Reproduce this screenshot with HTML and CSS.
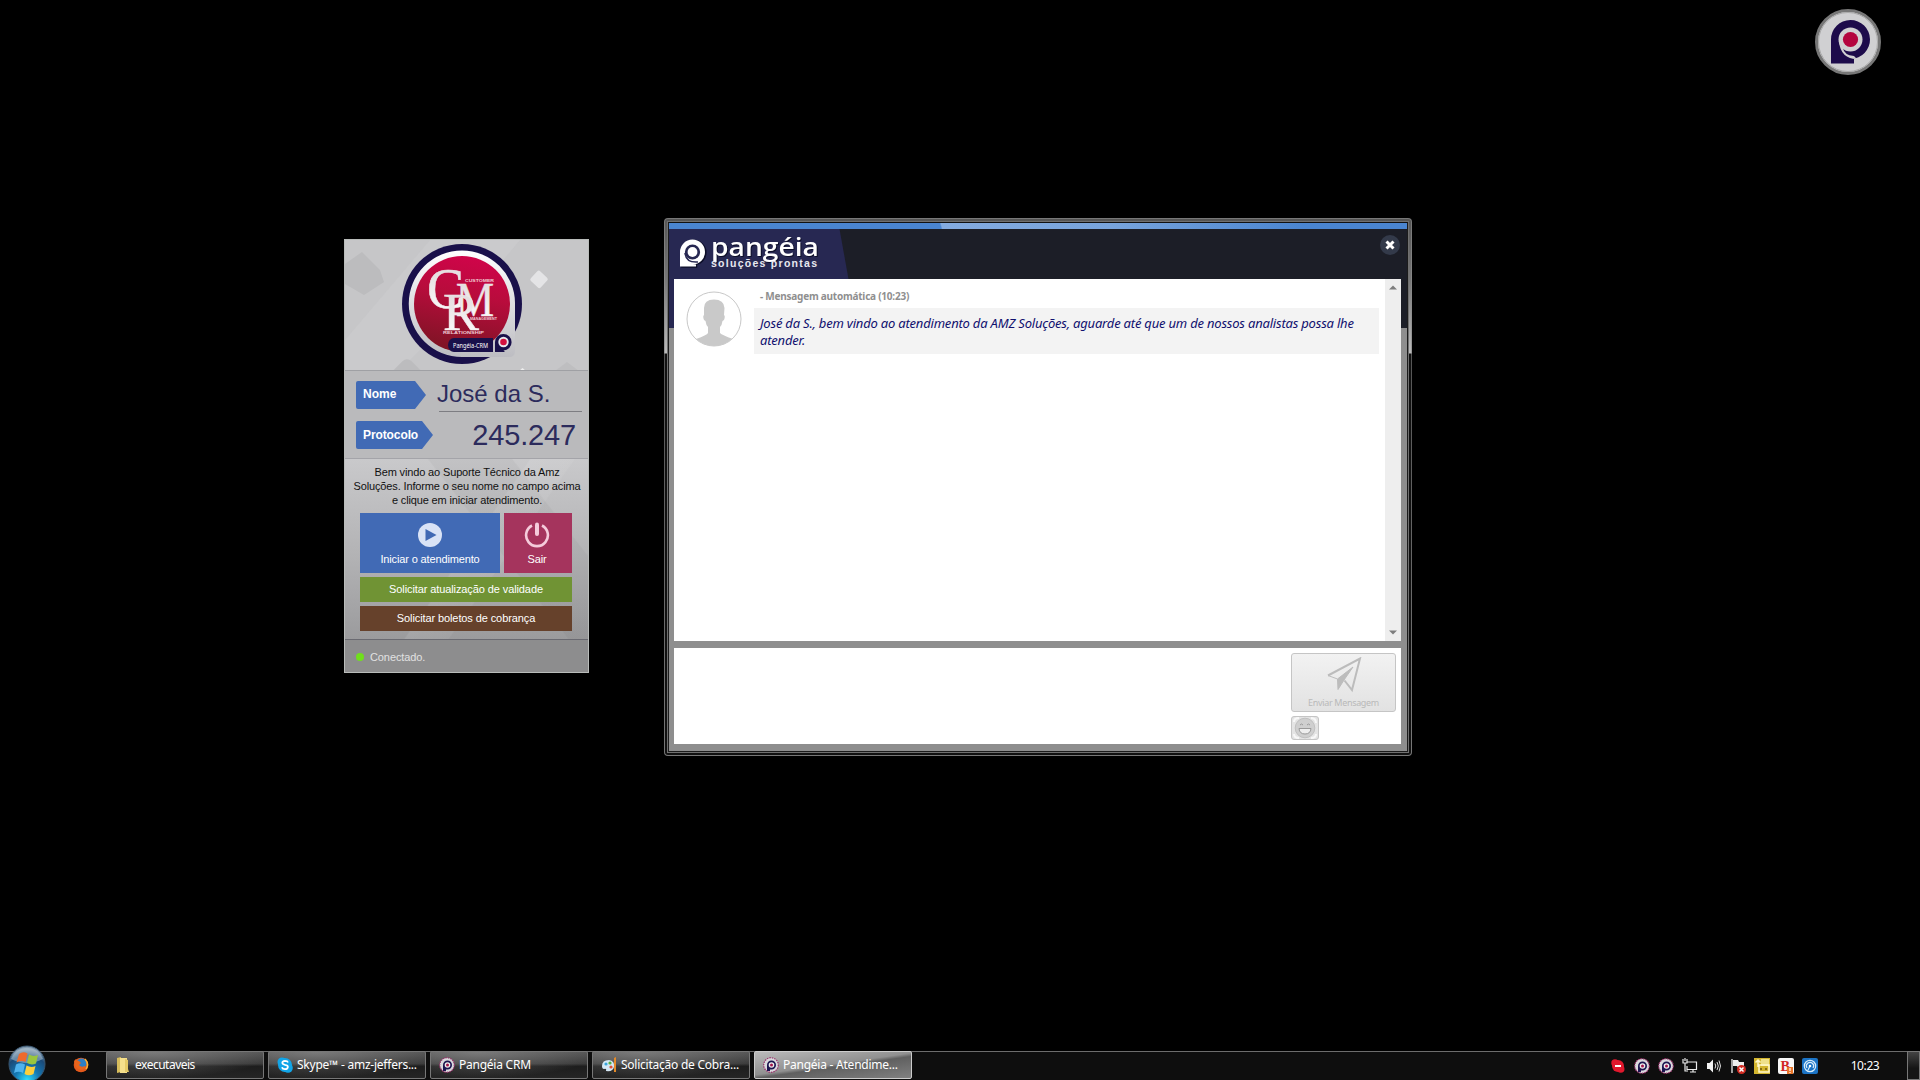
FILE: index.html
```html
<!DOCTYPE html>
<html lang="pt-BR">
<head>
<meta charset="utf-8">
<title>Pangéia - Atendimento</title>
<link rel="stylesheet" href="styles.css">
</head>
<body>
<svg class="defs" width="0" height="0">
  <defs>
    <linearGradient id="silver" x1="0" y1="0" x2="0" y2="1"><stop offset="0" stop-color="#fff"/><stop offset="1" stop-color="#bdbdc2"/></linearGradient>
    <linearGradient id="crimson" x1="0.6" y1="0" x2="0.4" y2="1"><stop offset="0" stop-color="#d0044a"/><stop offset=".4" stop-color="#b80c3c"/><stop offset="1" stop-color="#7d1424"/></linearGradient>
    <linearGradient id="letters" x1="0" y1="0" x2="0" y2="1"><stop offset="0" stop-color="#dcd4d6"/><stop offset="1" stop-color="#fff"/></linearGradient>
    <radialGradient id="orb" cx=".5" cy=".95" r=".85"><stop offset="0" stop-color="#2fe0ff"/><stop offset=".4" stop-color="#1478b4"/><stop offset=".8" stop-color="#1b4a78"/><stop offset="1" stop-color="#7d95ab"/></radialGradient>
    <symbol id="ptray" viewBox="0 0 16 16">
      <circle cx="8" cy="8" r="7.300" fill="#d9d9dd" stroke="#9b2f6b" stroke-width="1.200" stroke-dasharray="1.500 1"/>
      <path d="M4 14V8A4.500 4.500 0 1 1 8.500 12.500H7V14Z" fill="#1d1550"/>
      <circle cx="8.500" cy="8" r="2.800" fill="#eee"/><circle cx="8.500" cy="8" r="1.500" fill="#a2164c"/>
    </symbol>
  </defs>
</svg>

<svg class="desk-badge" width="68" height="68" viewBox="0 0 68 68">
  <circle cx="34" cy="34" r="31.500" fill="#d0d0d2" stroke="#777" stroke-width="3"/>
  <circle cx="34" cy="34" r="29.500" fill="none" stroke="#aaa" stroke-width="1"/>
  <path d="M17 55.500V31.500A19.500 19.500 0 1 1 37 51H40V55.500Z" fill="#1d0b4b"/>
  <circle cx="36.500" cy="31.500" r="12" fill="#d0d0d2"/>
  <path d="M25 34Q27 51 43 51L40 48Q30 47 29 40Z" fill="#d0d0d2"/>
  <circle cx="36.500" cy="31.500" r="7.600" fill="#b4053f"/>
</svg>

<section class="login">
  <div class="login-top">
    <svg width="243" height="131" viewBox="345 240 243 131">
      <rect x="345" y="240" width="243" height="131" fill="#c6c6c8"/>
      <path d="M345 264L362 252L380 270L384 282L364 295L345 284Z" fill="#bcbcbe"/>
      <path d="M430 240h90l-50 60-70 70h-55v-30Z" fill="#cececf" opacity=".5"/>
      <rect x="392" y="363" width="30" height="30" rx="6" transform="rotate(45 407 378)" fill="#bcbcbe"/>
      <path d="M555 371l12-9 12 9Z" fill="#bebec0"/>
      <rect x="532.500" y="272.500" width="13.500" height="13.500" rx="2" transform="rotate(43 539 279)" fill="#e4e4e6"/>
      <path d="M519 371l3.500-3 3.500 3Z" fill="#eee"/>
      <circle cx="462" cy="304" r="60" fill="#19104a"/>
      <path d="M462 250.500A53 53 0 0 1 515 303V351Q515 357 509 357H462A53 53 0 0 1 462 250.500Z" fill="url(#silver)"/>
      <circle cx="462" cy="304" r="48" fill="url(#crimson)"/>
      <g fill="url(#letters)" stroke="#efe8ea" stroke-width=".5" font-family="Liberation Serif, serif">
        <text x="427" y="308" font-size="57" textLength="37" lengthAdjust="spacingAndGlyphs">C</text>
        <text x="456" y="315.500" font-size="48" textLength="38" lengthAdjust="spacingAndGlyphs">M</text>
        <text x="443" y="329.500" font-size="53" textLength="36" lengthAdjust="spacingAndGlyphs">R</text>
      </g>
      <g fill="#f1cdd5" font-family="Liberation Sans, sans-serif" font-weight="bold" font-size="4">
        <text x="465" y="282" textLength="29" lengthAdjust="spacingAndGlyphs">CUSTOMER</text>
        <text x="470" y="320" font-size="3.500" textLength="27" lengthAdjust="spacingAndGlyphs">MANAGEMENT</text>
        <text x="443" y="334" textLength="41" lengthAdjust="spacingAndGlyphs">RELATIONSHIP</text>
      </g>
      <path d="M454 338H493V352H454A6 7 0 0 1 454 338Z" fill="#19104a"/>
      <text x="453" y="347.500" font-family="Noto Sans, sans-serif" font-size="6.200" fill="#fff" textLength="35" lengthAdjust="spacingAndGlyphs">Pangéia-CRM</text>
      <path d="M495 352V342A8.300 8.300 0 1 1 503.500 350.500L505 352Z" fill="#19104a"/>
      <circle cx="503.500" cy="342" r="5.200" fill="#e8e8ec"/><circle cx="503.500" cy="342" r="3.300" fill="#d4123f"/>
    </svg>
  </div>
  <div class="fields">
    <div class="field"><span class="tag tag-name">Nome</span><span class="name">José da S.</span></div>
    <div class="field"><span class="tag tag-prot">Protocolo</span><span class="prot">245.247</span></div>
  </div>
  <div class="login-body">
    <p class="welcome"><span>Bem vindo ao Suporte Técnico da Amz</span><span>Soluções. Informe o seu nome no campo acima</span><span>e clique em iniciar atendimento.</span></p>
    <div class="pair">
      <div class="tile blue"><svg width="26" height="26" viewBox="0 0 26 26"><circle cx="13" cy="13" r="12" fill="#d9e3f6"/><path d="M8.500 7L19.500 13L8.500 19Z" fill="#4169b4"/></svg><span>Iniciar o atendimento</span></div>
      <div class="tile pink"><svg width="26" height="26" viewBox="0 0 26 26"><path d="M8 3.500A10.900 10.900 0 1 0 18 3.500" fill="none" stroke="#f5cbdb" stroke-width="2.600"/><path d="M13 2.500V12" stroke="#f5cbdb" stroke-width="4" stroke-linecap="round"/></svg><span>Sair</span></div>
    </div>
    <div class="bar green"><span>Solicitar atualização de validade</span></div>
    <div class="bar brown"><span>Solicitar boletos de cobrança</span></div>
  </div>
  <div class="status"><i></i><span>Conectado.</span></div>
</section>

<section class="chat">
  <div class="chat-in">
    <div class="strip"></div>
    <header class="head">
      <svg class="logo" width="180" height="50" viewBox="669 229 180 50">
        <path d="M669 229H839.500L848.500 279H669Z" fill="#272852"/>
        <path d="M681.200 267.700V253.200A12.700 12.700 0 1 1 693.900 265.200H697.200V267.700Z" fill="#0d0e28"/>
        <path d="M680 266.500V252A12.500 12.500 0 1 1 692.700 264.500H696V266.500Z" fill="#fff"/>
        <circle cx="692.500" cy="252" r="7.600" fill="#272852"/><circle cx="692.500" cy="252" r="4.900" fill="#fff"/>
        <path d="M685 253Q686 263 698 262" fill="none" stroke="#272852" stroke-width="1.500"/>
        <text class="brand" x="711" y="255.500" font-size="25" textLength="108" lengthAdjust="spacingAndGlyphs">pangéia</text>
        <text class="sub" x="711" y="267" font-size="10.500" textLength="106">soluções prontas</text>
      </svg>
      <svg class="close" width="20" height="20" viewBox="0 0 20 20"><circle cx="10" cy="10" r="10" fill="#333a4a"/><path d="M6.500 6.500L13.500 13.500M13.500 6.500L6.500 13.500" stroke="#fff" stroke-width="3"/></svg>
    </header>
    <div class="log">
      <svg class="avatar" width="56" height="56" viewBox="0 0 56 56"><defs><clipPath id="av"><circle cx="28" cy="28" r="27"/></clipPath></defs><circle cx="28" cy="28" r="27" fill="#fff" stroke="#c8c8c8"/><g clip-path="url(#av)" fill="#c9c9c9"><path d="M18 17Q18 8.500 28 8.500T38.500 17L38 24Q39.500 25 38 29L36.500 30Q36 34 34 36V42Q36 44 47 48L52 56H4L10 48Q21 44 22 42V36Q20 34 19.500 30L18 29Q16.500 25 18 24Z"/></g></svg>
      <div class="msg">
        <div class="who"><span>- Mensagem automática (10:23)</span></div>
        <div class="bubble"><span>José da S., bem vindo ao atendimento da AMZ Soluções, aguarde até que um de nossos analistas possa lhe</span><span>atender.</span></div>
      </div>
      <div class="scroll">
        <svg width="8" height="5" viewBox="0 0 8 5"><path d="M0 4.500L4 .5L8 4.500Z" fill="#7d7d7d"/></svg>
        <svg width="8" height="5" viewBox="0 0 8 5"><path d="M0 .5L4 4.500L8 .5Z" fill="#7d7d7d"/></svg>
      </div>
    </div>
    <div class="compose">
      <div class="tools">
        <div class="send"><svg width="36" height="36" viewBox="0 0 36 36"><path d="M2 18.500L34 1.500L26 33L18.500 23.500" fill="none" stroke="#bcbcbc" stroke-width="2"/><path d="M2 18.500L11.500 22L27 10L18 23L12 32.500L11.500 22" fill="#bcbcbc" stroke="#bcbcbc"/></svg><span>Enviar Mensagem</span></div>
        <div class="emoji"><svg width="24" height="22" viewBox="0 0 24 22"><path d="M1 5Q1 1 6 1M18 1Q23 1 23 6M1 17Q1 21 6 21M18 21Q23 21 23 17" fill="none" stroke="#f8f8f8" stroke-width="2"/><circle cx="12" cy="11" r="9.800" fill="#cfcfcf" stroke="#c0c0c0"/><path d="M7 8Q8.500 6 10 8M14 8Q15.500 6 17 8" fill="none" stroke="#999"/><path d="M6 11.500H18Q17.500 17 12 17T6 11.500Z" fill="#eee" stroke="#999"/></svg></div>
      </div>
    </div>
  </div>
</section>

<footer class="taskbar">
  <svg class="start" width="38" height="36" viewBox="0 0 38 36">
    <circle cx="19" cy="19" r="18" fill="url(#orb)" stroke="#39566f"/>
    <path d="M3 14A17 17 0 0 1 35 14Q19 22 3 14Z" fill="#c8d6e0" opacity=".45"/>
    <path d="M11 9Q15 6 19.500 8.500L17.500 17Q13 15 8.500 17.500Z" fill="#ee6a2c"/>
    <path d="M21 9.500Q25 12 30 10L28 18.500Q23.500 20.500 19 18Z" fill="#9ac63e"/>
    <path d="M8 19.500Q12.500 17 17 19.500L15 28Q11 25.500 6 28Z" fill="#4fb3ee"/>
    <path d="M18.500 20.500Q23 23 27.500 21L25.500 29Q21 31.500 16.500 29Z" fill="#fccf3c"/>
  </svg>
  <svg class="fox" width="16" height="16" viewBox="0 0 16 16"><circle cx="8" cy="8" r="7.300" fill="#e4591b"/><circle cx="8.500" cy="6.500" r="5" fill="#2d7fc4"/><path d="M1 4L3 2Q4 4 6 4L8 6L6 8Q8 11 12 9Q13 12 8 13Q2 12 1 4Z" fill="#e8641c"/><path d="M12 2Q16.500 7 13 12" fill="none" stroke="#f9b233" stroke-width="1.500"/></svg>
  <div class="tasks">
    <div class="task"><svg width="16" height="16" viewBox="0 0 16 16"><path d="M2 1L6 0V15L2 16Z" fill="#d7bd5c"/><path d="M5 1H12V16H5Z" fill="#f5e08c"/><path d="M10 2L13 3V12L14 15H10Z" fill="#e5ca67"/></svg><span class="short">executaveis</span></div>
    <div class="task"><svg width="16" height="16" viewBox="0 0 16 16"><circle cx="8" cy="8" r="7" fill="#12a5e8"/><circle cx="5" cy="5" r="4.500" fill="#12a5e8"/><circle cx="11" cy="11" r="4.800" fill="#12a5e8"/><path d="M11 5.500Q10.500 3.800 8 3.800Q5.200 4 5.300 6Q5.500 7.300 8 7.900Q11 8.500 10.900 10Q10.500 12.200 8 12.200Q5.500 12.200 5 10.300" fill="none" stroke="#fff" stroke-width="1.700"/></svg><span>Skype™ - amz-jeffers...</span></div>
    <div class="task"><svg width="16" height="16"><use href="#ptray"/></svg><span>Pangéia CRM</span></div>
    <div class="task"><svg width="16" height="16" viewBox="0 0 16 16"><path d="M1 9Q1 3 8 3Q14 4 13 10Q12 15 5 14Q6 11 3 12Q1 12 1 9Z" fill="#d5e8f5"/><circle cx="5" cy="7" r="1.600" fill="#39a6dc"/><circle cx="9" cy="6" r="1.600" fill="#54ae3f"/><circle cx="10" cy="10" r="1.600" fill="#dc4f38"/><path d="M13 1L15 0V15H13Z" fill="#e58a28"/></svg><span>Solicitação de Cobra...</span></div>
    <div class="task active"><svg width="16" height="16"><use href="#ptray"/></svg><span>Pangéia - Atendime...</span></div>
  </div>
  <div class="tray">
    <svg width="16" height="16" viewBox="0 0 16 16"><circle cx="8" cy="8" r="6" fill="#e0182d"/><circle cx="5" cy="5" r="3.700" fill="#e0182d"/><circle cx="10.700" cy="11" r="3.800" fill="#e0182d"/><path d="M5 8H11" stroke="#fff" stroke-width="2"/></svg>
    <svg width="16" height="16"><use href="#ptray"/></svg>
    <svg width="16" height="16"><use href="#ptray"/></svg>
    <svg width="16" height="16" viewBox="0 0 16 16"><path d="M5.500 4H14.500V11.500H5V8M8 14H14M11 11V14M1 1V5H5V1M3 5V13H6M3 0V3" fill="none" stroke="#ececec" stroke-width="1.200"/></svg>
    <svg width="16" height="16" viewBox="0 0 16 16"><path d="M1 5H3.500L7 1.500V14.500L3.500 11H1Z" fill="#f2f2f2"/><path d="M9 5.500Q10.500 8 9 10.500M11 4Q13.500 8 11 12M13 2.500Q16 8 13 13.500" fill="none" stroke="#ddd"/></svg>
    <svg width="16" height="16" viewBox="0 0 16 16"><path d="M2 1V15" stroke="#eee" stroke-width="1.300"/><path d="M3 2H8L9 4H14V10H8L7 8H3Z" fill="#eee"/><circle cx="11.500" cy="11.500" r="4.500" fill="#d22b22"/><path d="M9.500 9.500L13.500 13.500M13.500 9.500L9.500 13.500" stroke="#fff" stroke-width="1.500"/></svg>
    <svg width="16" height="16" viewBox="0 0 16 16"><path d="M0 0H16V16H0Z" fill="#d3b52e"/><path d="M7 1H15V8H7Z" fill="#efe08a"/><path d="M4 9V2M1.500 4.500L4 2L6.500 4.500M5 7H15V14H5Z" fill="none" stroke="#fff7ca" stroke-width="1.500"/><path d="M6 11H8M11 11H13" stroke="#876c13" stroke-width="2"/></svg>
    <svg width="16" height="16" viewBox="0 0 16 16"><rect width="16" height="16" rx="2" fill="#f8f8f8"/><text x="2.500" y="13" font-family="Liberation Serif, serif" font-weight="bold" font-size="14" fill="#d12525">B</text><rect x="9" y="9" width="6" height="7" fill="#e9762a"/><path d="M12 10V13M12 14V15" stroke="#fff" stroke-width="1.200"/></svg>
    <svg width="16" height="16" viewBox="0 0 16 16"><rect width="16" height="16" rx="2" fill="#1b73c4"/><circle cx="8" cy="8" r="5.700" fill="none" stroke="#d8ecfa" stroke-width="1.200"/><path d="M5 10A3.600 3.600 0 1 1 11 10M8 8L6 12" fill="none" stroke="#d8ecfa" stroke-width="1.200"/><circle cx="8" cy="8" r="1.300" fill="#fff"/></svg>
  </div>
  <div class="clock"><span>10:23</span></div>
  <div class="peek"></div>
</footer>
</body>
</html>
```
FILE: styles.css
```css
* { box-sizing: border-box; }
body { margin: 0; width: 1920px; height: 1080px; background: #000; overflow: hidden; position: relative; font-family: "Liberation Sans", Arial, sans-serif; }
svg { display: block; flex: none; }
.defs { position: absolute; }
.desk-badge { position: absolute; left: 1814px; top: 8px; }

/* support login window */
.login { position: absolute; left: 344px; top: 239px; width: 245px; height: 434px; border: 1px solid #b9bcba; display: flex; flex-direction: column; background: #bbb; }
.login-top { height: 131px; border-bottom: 1px solid #9fa0a4; overflow: hidden; }
.fields { height: 88px; background: #bababc; padding: 9px 5px 0 11px; border-bottom: 1px solid #a4a4a9; }
.field { display: flex; height: 40px; }
.tag { height: 28px; margin-top: 1px; background: #416ab5; color: #fff; font-weight: bold; font-size: 12px; line-height: 27px; padding-left: 7px; border-radius: 2px 0 0 2px; clip-path: polygon(0 0, calc(100% - 11px) 0, 100% 50%, calc(100% - 11px) 100%, 0 100%); }
.tag-name { width: 70px; margin-right: 1px; }
.tag-prot { width: 77px; letter-spacing: -.1px; line-height: 28px; }
.name { margin-left: 12px; width: 143px; height: 32px; border-bottom: 1px solid #7d7d82; font-size: 24px; line-height: 27px; color: #2c2b5c; text-indent: -2px; }
.prot { flex: 1; text-align: right; padding-right: 7px; font-size: 29px; letter-spacing: -.15px; line-height: 31px; color: #2c2b5c; }
.login-body { height: 181px; padding: 6px 0 0 15px; background: linear-gradient(125deg, transparent 50%, #ffffff18 50.5%, #ffffff10 62%, transparent 62.5%), linear-gradient(52deg, transparent 58%, #00000009 58.5%, #00000009 80%, transparent 80.5%), linear-gradient(#c9c9cb, #b2b2b4 55%, #9b9b9d); border-bottom: 1px solid #6a6a71; }
.welcome { margin: 0 14px 6px 0; font-size: 11px; line-height: 14px; color: #111; display: flex; flex-direction: column; align-items: center; white-space: nowrap; letter-spacing: -.14px; }
.pair { display: flex; gap: 4px; }
.tile { height: 60px; display: flex; flex-direction: column; align-items: center; padding-top: 9px; color: #fff; font-size: 11px; gap: 4px; line-height: 14px; letter-spacing: -.14px; }
.blue { width: 140px; background: #416ab5; }
.pink { width: 68px; background: #a5345d; padding-right: 2px; }
.bar { width: 212px; height: 25px; margin-top: 4px; line-height: 25px; text-align: center; color: #fff; font-size: 11px; letter-spacing: -.1px; }
.green { background: #709334; }
.brown { background: #66412b; }
.status { flex: 1; background: #8d8d8e; display: flex; align-items: center; gap: 6px; padding: 2px 0 0 11px; color: #e1e1e1; font-size: 11px; letter-spacing: -.1px; }
.status i { width: 8px; height: 8px; border-radius: 50%; background: #70e01c; }

/* chat window */
.chat { position: absolute; left: 664px; top: 218px; width: 748px; height: 538px; border-radius: 4px; background: linear-gradient(#777 0, #999 135px, #555 136px, #777 100%); }
.chat::before { content: ""; position: absolute; inset: 1px; border-radius: 3px; background: linear-gradient(#555 0, #777 60px, #bbb 134px, #111 135px, #111 100%); }
.chat-in { position: absolute; left: 3px; top: 3px; width: 742px; height: 532px; border: 2px solid #1c1c1c; border-top-color: #111; outline: 1px solid #707070; outline-offset: -1px; display: flex; flex-direction: column; background: linear-gradient(90deg, #272852 50%, #1c1e27 50%) 0 0 / 100% 105px no-repeat #8e8e8e; }
.strip { height: 6px; background: linear-gradient(75deg, #4a85d0 36.8%, #84abdf 37%, #78a4dc 60%, #4a85d0 86%); }
.head { height: 50px; background: #1c1e27; display: flex; justify-content: space-between; }
.logo { overflow: visible; }
.brand { font-family: "Open Sans", "Noto Sans", sans-serif; font-weight: 600; fill: #fff; filter: drop-shadow(1px 1px 0 #0d0e28); }
.sub { font-family: "Liberation Sans", sans-serif; font-weight: bold; fill: #e8e8f0; }
.close { margin: 6px 7px 0 0; }
.log { height: 362px; margin: 0 6px 0 5px; background: #fff; display: flex; }
.avatar { margin: 12px 12px 0 12px; }
.msg { flex: 1; padding: 10px 6px 0 0; }
.who { height: 19px; padding-left: 6px; font: bold 10px/15px "Noto Sans", sans-serif; letter-spacing: -.23px; color: #8f8f8f; }
.bubble { height: 46px; padding: 7px 0 0 6px; background: #f3f3f3; font: italic 13px/17px "Noto Sans", sans-serif; letter-spacing: -.2px; color: #10106e; white-space: nowrap; display: flex; flex-direction: column; align-items: flex-start; }
.scroll { width: 16px; background: #eee; display: flex; flex-direction: column; justify-content: space-between; align-items: center; padding: 6px 0; }
.compose { height: 96px; margin: 7px 6px 0 5px; background: #fff; display: flex; justify-content: flex-end; padding: 5px 5px 0 0; }
.tools { width: 105px; }
.send { height: 59px; border: 1px solid #c5c5c5; border-radius: 3px; background: linear-gradient(#f2f2f2, #e2e2e2); display: flex; flex-direction: column; align-items: center; padding-top: 3px; font: 9px/14px "Noto Sans", sans-serif; letter-spacing: -.33px; color: #b9b9b9; gap: 3px; }
.emoji { width: 28px; height: 24px; margin-top: 4px; border: 1px solid #c5c5c5; border-radius: 3px; background: #e4e4e4; padding-left: 1px; }

/* taskbar */
.taskbar { position: absolute; left: 0; top: 1045px; width: 1920px; height: 35px; display: flex; align-items: flex-end; background: linear-gradient(transparent 6px, #6c6c6c 6px, #6c6c6c 7px, #0e0e0e 7px); color: #fff; font: 12px/16px "Noto Sans", sans-serif; }
.start { margin: 0 0 -1px 8px; }
.fox { margin: 0 17px 7px 27px; }
.tasks { display: flex; gap: 4px; margin-bottom: 1px; }
.task { width: 158px; height: 28px; border: 1px solid #777; border-radius: 2px; background: radial-gradient(ellipse 120px 26px at 30% 0, #a0a0a080, transparent), linear-gradient(#555, #3c3c3c 45%, #1d1d1d 55%, #252525); display: flex; align-items: center; gap: 4px; padding-left: 8px; white-space: nowrap; letter-spacing: -.24px; }
.short { letter-spacing: -.5px; }
.active { border-color: #ccc; background: linear-gradient(172deg, #bbb, #909090 48%, #606060 55%, #808080); }
.tray { display: flex; gap: 8px; margin: 0 0 6px 698px; }
.clock { width: 86px; height: 28px; line-height: 28px; text-align: center; padding-left: 8px; letter-spacing: -.4px; }
.peek { width: 13px; height: 29px; margin-left: auto; border: 1px solid #777; background: linear-gradient(#444, #151515 60%); }
```
